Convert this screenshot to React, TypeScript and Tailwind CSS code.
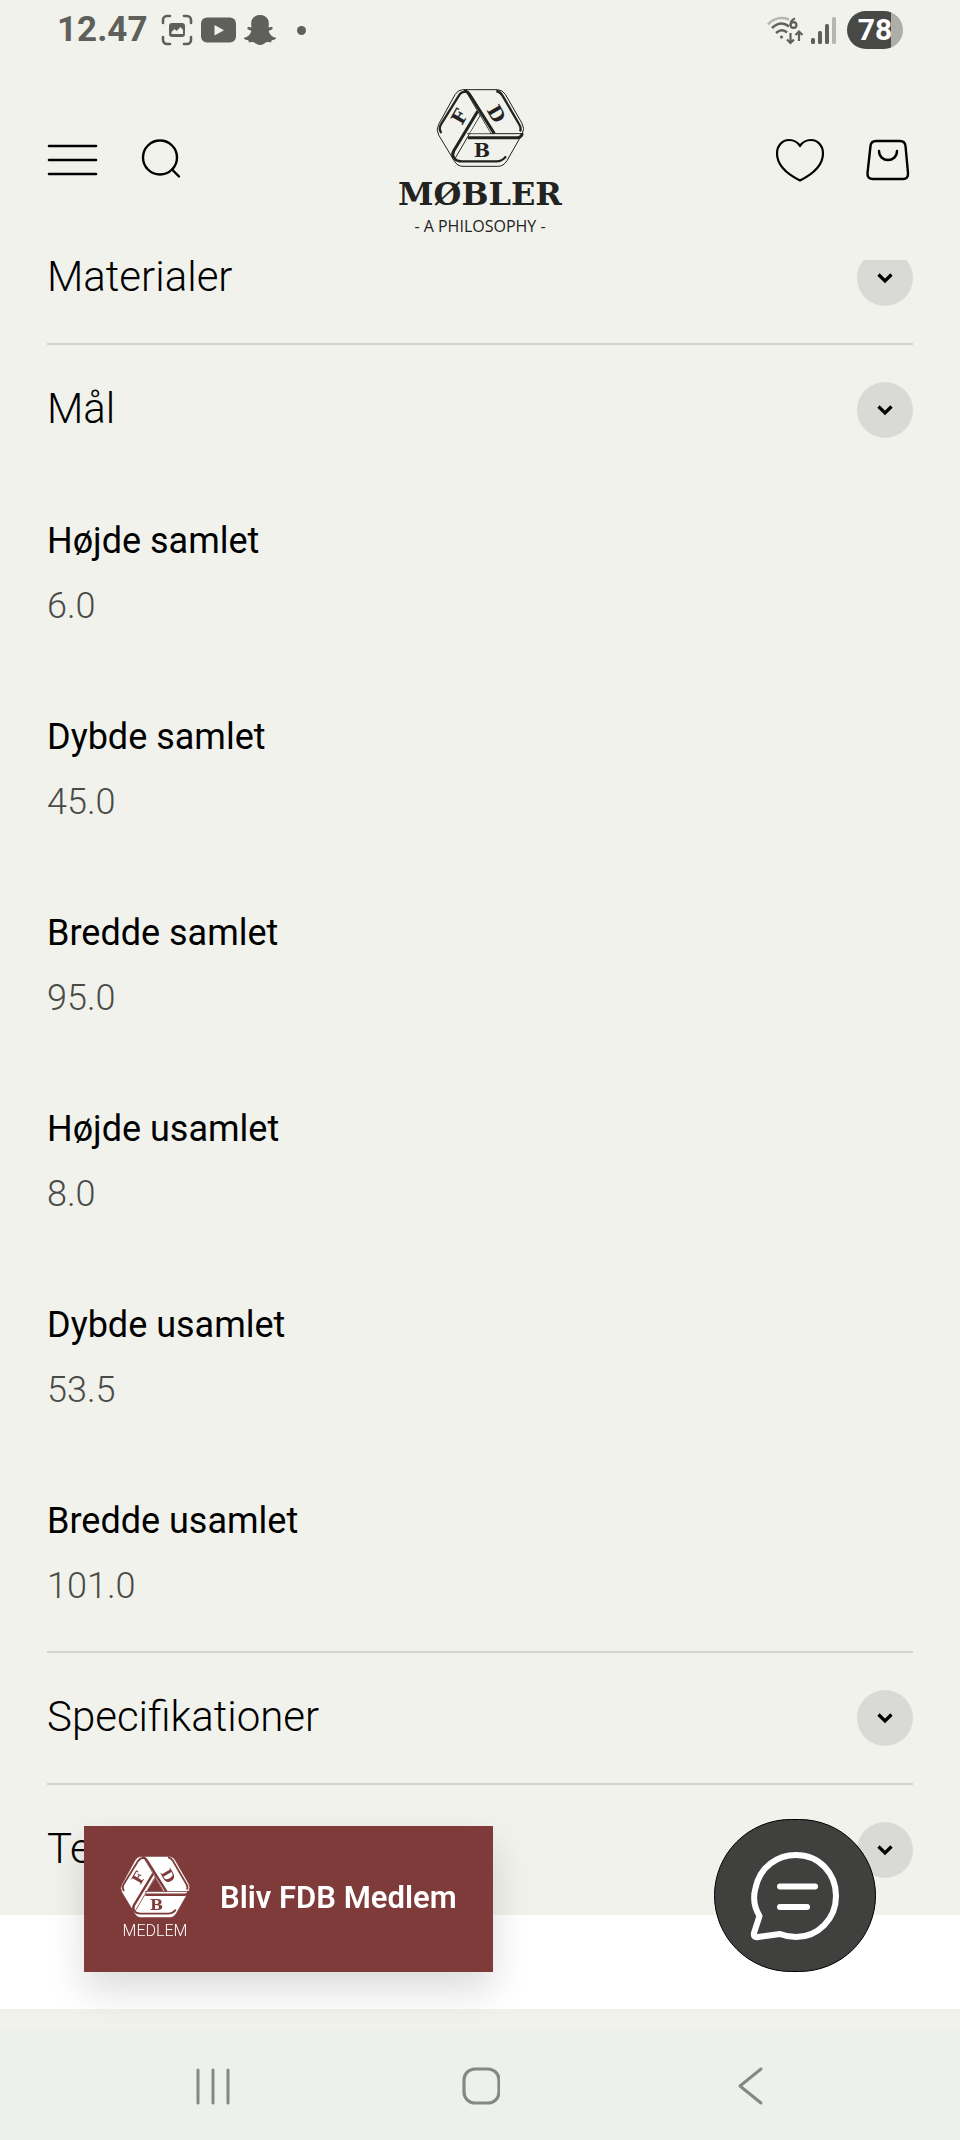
import { FaSnapchatGhost } from 'react-icons/fa';

const measurements = [
  { label: 'Højde samlet', value: '6.0' },
  { label: 'Dybde samlet', value: '45.0' },
  { label: 'Bredde samlet', value: '95.0' },
  { label: 'Højde usamlet', value: '8.0' },
  { label: 'Dybde usamlet', value: '53.5' },
  { label: 'Bredde usamlet', value: '101.0' },
];

function StatusBar() {
  return (
    <div className="flex h-[60px] items-center justify-between px-[57px] text-[#5f605b]">
      <div className="flex items-center">
        <span className="text-[35px] leading-10 font-bold">12.47</span>
        <svg className="ml-[14px] h-8 w-8" viewBox="0 0 32 32" fill="none" stroke="currentColor" strokeWidth="2.6" strokeLinecap="round">
          <path d="M2 9V6a4 4 0 0 1 4-4h3M23 2h3a4 4 0 0 1 4 4v3M30 23v3a4 4 0 0 1-4 4h-3M9 30H6a4 4 0 0 1-4-4v-3" />
          <rect x="8" y="9" width="16" height="14" rx="3" fill="currentColor" stroke="none" />
          <path d="M10.500 20v-2l3-3 2 2 4-4 2.500 3v4z" fill="#f1f2ec" stroke="none" />
        </svg>
        <svg className="ml-2 h-[26px] w-[35px]" viewBox="0 0 35 26">
          <rect width="35" height="25" y="0.500" rx="6" fill="currentColor" />
          <path d="M13.500 8v10.500L23 13.200z" fill="#f1f2ec" />
        </svg>
        <FaSnapchatGhost className="ml-2 h-8 w-8" />
        <span className="ml-[21px] h-[9px] w-[9px] rounded-full bg-[#5f605b]" />
      </div>
      <div className="flex items-center">
        <svg className="h-[30px] w-9" viewBox="0 0 36 30" fill="none" stroke="currentColor" strokeWidth="2.500">
          <path d="M1 9.500C7 3 15 2 22 4.500" stroke="#b5b6b1" />
          <path d="M5 13c6-5.500 12-5.500 17-1.500M9 18c4-3.500 8-3.500 11-.5" />
          <circle cx="14.500" cy="22" r="1.600" fill="currentColor" stroke="none" />
          <path d="M28 3.500c-3 1-4.500 3.500-4.500 6.500" strokeWidth="2.200" />
          <circle cx="26.500" cy="10" r="2.900" strokeWidth="2.200" />
          <path d="M23.500 18v10M20 24.500l3.500 3.500 3.500-3.500M32 26V16.500M28.500 20l3.500-3.500 3.500 3.500" strokeWidth="2.200" />
        </svg>
        <svg className="ml-2 h-[27px] w-[26px]" viewBox="0 0 26 27" fill="currentColor">
          <rect x="0" y="21" width="4" height="6" rx="1.500" />
          <rect x="7" y="14" width="4" height="13" rx="1.500" />
          <rect x="14" y="7" width="4" height="20" rx="1.500" />
          <rect x="21" y="0" width="4" height="27" rx="1.500" fill="#b5b6b1" />
        </svg>
        <div className="ml-[10px] flex h-[38px] w-14 items-center justify-center rounded-full bg-linear-to-r from-[#484947] from-78% to-[#adaea9] to-78% text-[30px] leading-none font-bold text-white">
          78
        </div>
      </div>
    </div>
  );
}

function Emblem({ className, line, face, core }: { className: string; line: string; face: string; core: string }) {
  return (
    <svg className={className} viewBox="165 22 270 240" fill="none" stroke={line} strokeLinejoin="round" aria-hidden="true">
      <path d="M248 27H352q15 0 24 14L426 128q9 16 1 31L381 240q-10 17-28 17H249q-17 0-26-16L176 163q-9-16 0-32L225 42q9-15 23-15Z" fill={face} strokeWidth="3" />
      {/* outer rims */}
      <path d="M184 157q-9-13-1-26L237 44q8-12 22-11" strokeWidth="7" />
      <path d="M349 31q11 2 18 13L417 130q8 13 3 22" strokeWidth="7" />
      <path d="M222 233q9 9 23 9H349q18 0 29-15" strokeWidth="7" />
      {/* folds between the three bands */}
      <path d="M252 30q11 1 18 13L343 159" strokeWidth="9" />
      <path d="M427 158q-3 13-16 13H264" strokeWidth="9" />
      <path d="M293 92L221 211q-6 12 1 22" strokeWidth="9" />
      <path d="M302 102L226 232M262 159H428M258 32L333 159" strokeWidth="3" />
      <path d="M301 107L270 158H331Z" fill={core} stroke="none" />
      <g fill={line} stroke="none" fontFamily="'DejaVu Serif', serif" fontWeight="700" fontSize="58" textAnchor="middle">
        <text x="306" y="228">B</text>
        <text transform="translate(256 118) rotate(-60)">F</text>
        <text transform="translate(331 110) rotate(60)">D</text>
      </g>
    </svg>
  );
}

function Header() {
  return (
    <header className="sticky top-0 z-10 h-[260px] bg-[#f1f2ec]">
      <StatusBar />
      <div className="grid grid-cols-3 items-start px-[46px]">
        <div className="flex items-center gap-10 pt-[76px]">
          <button type="button" aria-label="Menu">
            <svg className="h-11 w-[52px]" viewBox="0 0 52 44" stroke="#000" strokeWidth="2.600" strokeLinecap="round">
              <path d="M3 10h47M3 24h47M3 38h47" />
            </svg>
          </button>
          <button type="button" aria-label="Søg">
            <svg className="h-11 w-11" viewBox="0 0 44 44" fill="none" stroke="#000" strokeWidth="2.400" strokeLinecap="round">
              <circle cx="22" cy="21.500" r="17" />
              <path d="M34 33.500l7 7" />
            </svg>
          </button>
        </div>
        <a href="#" className="flex flex-col items-center pt-7 text-[#22221f]">
          <Emblem className="h-20 w-[90px]" line="#22221f" face="#f1f2ec" core="#f1f2ec" />
          <span className="mt-2 font-['DejaVu_Serif',serif] text-[32px] leading-9 font-bold">MØBLER</span>
          <span className="mt-[2px] font-['Open_Sans',sans-serif] text-base leading-6 whitespace-nowrap">- A PHILOSOPHY -</span>
        </a>
        <div className="flex items-center justify-end gap-10 pt-[76px]">
          <button type="button" aria-label="Favoritter">
            <svg className="h-[46px] w-[52px]" viewBox="0 0 52 46" fill="none" stroke="#000" strokeWidth="2.200" strokeLinejoin="round">
              <path d="M26 44.500C13 38 3 29 3 17.500C3 9.500 8.500 4 15 4c4.500 0 8.500 2 11 6c2.500-4 6.500-6 11-6c6.500 0 12 5.500 12 13.500C49 29 39 38 26 44.500Z" />
            </svg>
          </button>
          <button type="button" aria-label="Kurv" className="pr-1">
            <svg className="h-[46px] w-11" viewBox="0 0 44 46" fill="none" stroke="#000" strokeWidth="2.400" strokeLinecap="round">
              <path d="M10 5H34q5 0 5.500 5L42 37q.5 6-5 6H7q-6 0-5.500-6L4.500 10Q5 5 10 5Z" />
              <path d="M13 15c0 12 18 12 18 0" />
            </svg>
          </button>
        </div>
      </div>
    </header>
  );
}

function AccordionRow({ title, open = false }: { title: string; open?: boolean }) {
  return (
    <button type="button" aria-expanded={open} className="flex h-[130px] w-full items-center justify-between text-left">
      <span className="pb-[2px] text-[42px] leading-[56px] font-light">{title}</span>
      <span className="flex h-14 w-14 items-center justify-center rounded-full bg-[#d9dad5]">
        <svg className="h-3 w-4" viewBox="0 0 16 12" fill="none" stroke="#000" strokeWidth="3.200">
          <path d="M1.500 2.500L8 9l6.500-6.500" />
        </svg>
      </span>
    </button>
  );
}

export default function App() {
  return (
    <div className="relative flex min-h-screen flex-col bg-white font-[Roboto,sans-serif] text-black">
      <Header />

      <main className="-mt-[47px] bg-[#f1f2ec] px-[47px]">
        <section className="border-b-2 border-[#d3d4cf]">
          <AccordionRow title="Materialer" />
        </section>
        <section className="border-b-2 border-[#d3d4cf]">
          <AccordionRow title="Mål" open />
          <dl className="text-[36px] leading-[65px]">
            {measurements.map((item) => (
              <div key={item.label} className="pt-[34px] pb-8">
                <dt>{item.label}</dt>
                <dd className="font-light text-[#4a4b48]">{item.value}</dd>
              </div>
            ))}
          </dl>
        </section>
        <section className="border-b-2 border-[#d3d4cf]">
          <AccordionRow title="Specifikationer" />
        </section>
        <section>
          <AccordionRow title="Tekstil" />
        </section>
      </main>

      <div className="min-h-[93px] grow" />

      <a
        href="#"
        className="fixed bottom-[168px] left-[84px] flex h-[146px] w-[409px] items-center bg-[#7e3b3a] pl-[35px] text-white shadow-[0_18px_36px_rgba(0,0,0,0.14)]"
      >
        <span className="flex flex-col items-center">
          <Emblem className="h-16 w-[72px]" line="#7e3b3a" face="#fff" core="#7e3b3a" />
          <span className="text-base leading-6 font-light">MEDLEM</span>
        </span>
        <span className="ml-[29px] pb-[2px] text-[31px] leading-10 font-semibold">Bliv FDB Medlem</span>
      </a>

      <button
        type="button"
        aria-label="Chat"
        className="fixed right-[84px] bottom-[168px] flex h-[153px] w-[162px] items-center justify-center rounded-full border border-black bg-[#40403f]"
      >
        <svg className="h-[90px] w-[90px]" viewBox="0 0 90 90" fill="none" stroke="#fff" strokeWidth="6" strokeLinecap="round" strokeLinejoin="round">
          <path d="M9.500 65C4 56 3 46 5.500 37C10 16 27 4 46 4C69 4 86 22 86 45C86 68 68 86 46 86C40 86 35 85 30 83L8 86Q3 87 4 82Z" />
          <path d="M30 35.500H65M30 56H57" />
        </svg>
      </button>

      <footer className="bg-[#f1f2ec] pt-5">
        <nav className="grid h-[111px] grid-cols-3 items-center justify-items-center bg-[#eef0eb] px-[78px] pt-[3px] text-[#858884]">
          <button type="button" aria-label="Seneste">
            <svg className="h-10 w-10" viewBox="0 0 40 40" stroke="currentColor" strokeWidth="3" strokeLinecap="round">
              <path d="M6 4v33M21 4v33M36 4v33" />
            </svg>
          </button>
          <button type="button" aria-label="Hjem">
            <svg className="h-10 w-10" viewBox="0 0 40 40" fill="none" stroke="currentColor" strokeWidth="3.200">
              <rect x="4" y="3" width="35" height="34" rx="11" />
            </svg>
          </button>
          <button type="button" aria-label="Tilbage">
            <svg className="h-10 w-10" viewBox="0 0 40 40" fill="none" stroke="currentColor" strokeWidth="3" strokeLinecap="round" strokeLinejoin="round">
              <path d="M33 3L12 20l21 17" />
            </svg>
          </button>
        </nav>
      </footer>
    </div>
  );
}
